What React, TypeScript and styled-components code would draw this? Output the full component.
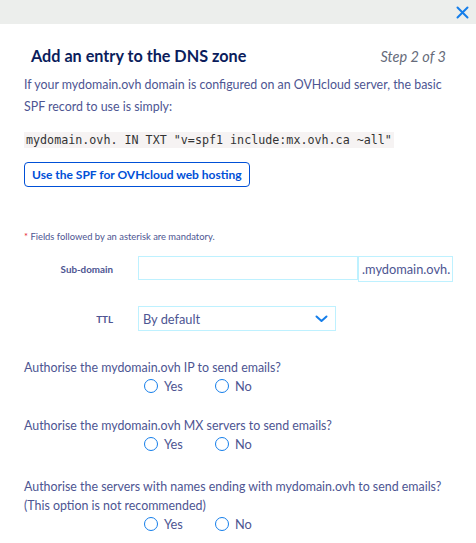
import React from 'react';
import styled, { createGlobalStyle } from 'styled-components';

const GlobalStyle = createGlobalStyle`
    body {
        margin: 0;
        background: #ffffff;
        font-family: Lato, "Open Sans", sans-serif;
        color: #4d5592;
    }
    * { box-sizing: border-box; }
`

const TopBar = styled.div`
    height: 24px;
    background: #eceeec;
    display: flex;
    justify-content: flex-end;
    align-items: center;
    padding-right: 7px;
`

const CloseButton = styled.button`
    border: 0;
    background: none;
    padding: 0;
    display: flex;
    cursor: pointer;
`

const Header = styled.div`
    display: flex;
    justify-content: space-between;
    align-items: baseline;
    padding: 20px 30px 0 31px;
`

const Title = styled.h2`
    margin: 0;
    font-size: 16.2px;
    line-height: 24px;
    font-weight: 700;
    color: #0b1d5c;
`

const Step = styled.span`
    font-size: 14.5px;
    font-style: italic;
    color: #666b7a;
`

const Body = styled.div`
    padding: 6px 24px 0 24px;
`

const Intro = styled.p`
    margin: 0;
    font-size: 12.4px;
    line-height: 22px;
`

const Code = styled.code`
    display: inline-block;
    margin-top: 14px;
    padding: 0 2px;
    background: #f6f3f3;
    color: #333;
    font-family: "DejaVu Sans Mono", "Liberation Mono", monospace;
    font-size: 11.7px;
    line-height: 16px;
`

const OutlineButton = styled.button`
    display: block;
    margin-top: 14px;
    height: 25px;
    padding: 0 7px;
    border: 1px solid #0050d7;
    border-radius: 4px;
    background: #fff;
    color: #0050d7;
    font-family: inherit;
    font-weight: 700;
    font-size: 12px;
`

const Note = styled.p`
    margin: 43px 0 0 0;
    font-size: 9.4px;
    line-height: 14px;
    & span { color: #e8283a; }
`

const FieldRow = styled.div<{ gap: number }>`
    display: grid;
    grid-template-columns: 89px auto;
    column-gap: 25px;
    align-items: center;
    margin-top: ${({ gap }) => gap}px;
`

const Label = styled.label`
    text-align: right;
    font-size: 9.8px;
    font-weight: 700;
`

const InputGroup = styled.div`
    display: flex;
`

const TextInput = styled.input`
    width: 220px;
    height: 24px;
    border: 1px solid #bef1ff;
    font-family: inherit;
    font-size: 12.4px;
    color: #4d5592;
    outline: none;
`

const Suffix = styled.span`
    height: 26px;
    border: 1px solid #bef1ff;
    padding: 0 2px 0 3px;
    display: flex;
    align-items: center;
    font-size: 12.8px;
`

const Select = styled.div`
    width: 198px;
    height: 25px;
    border: 1px solid #bef1ff;
    display: flex;
    align-items: center;
    justify-content: space-between;
    padding: 0 7px 0 4px;
    font-size: 12.8px;
`

const Question = styled.div<{ gap: number }>`
    margin-top: ${({ gap }) => gap}px;
`

const QuestionText = styled.p`
    margin: 0;
    font-size: 12.4px;
    line-height: 19px;
`

const RadioGroup = styled.div`
    display: flex;
    gap: 24px;
    padding-left: 120px;
`

const RadioOption = styled.label`
    display: flex;
    align-items: center;
    gap: 6px;
    font-size: 12.8px;
    line-height: 18px;
    width: 47px;
`

const RadioCircle = styled.span`
    width: 14px;
    height: 14px;
    border-radius: 50%;
    border: 1.5px solid #157eea;
    display: inline-block;
`

const Chevron = () => (
    <svg width="13" height="8" viewBox="0 0 13 8" fill="none">
        <path d="M1.5 1.5 L6.5 6 L11.5 1.5" stroke="#157eea" strokeWidth="2" strokeLinecap="round" strokeLinejoin="round" />
    </svg>
)

const CloseIcon = () => (
    <svg width="13" height="13" viewBox="0 0 13 13" fill="none">
        <path d="M1.5 1.5 L11.5 11.5 M11.5 1.5 L1.5 11.5" stroke="#157eea" strokeWidth="2" strokeLinecap="round" />
    </svg>
)

const questions = [
    { gap: 27, lines: ['Authorise the mydomain.ovh IP to send emails?'] },
    { gap: 21, lines: ['Authorise the mydomain.ovh MX servers to send emails?'] },
    { gap: 24, lines: ['Authorise the servers with names ending with mydomain.ovh to send emails?', '(This option is not recommended)'] },
]

export default function App() {
    return (
        <>
            <GlobalStyle />
            <TopBar>
                <CloseButton aria-label="Close"><CloseIcon /></CloseButton>
            </TopBar>
            <Header>
                <Title>Add an entry to the DNS zone</Title>
                <Step>Step 2 of 3</Step>
            </Header>
            <Body>
                <Intro>
                    If your mydomain.ovh domain is configured on an OVHcloud server, the basic SPF record to use is simply:
                </Intro>
                <Code>mydomain.ovh. IN TXT "v=spf1 include:mx.ovh.ca ~all"</Code>
                <OutlineButton>Use the SPF for OVHcloud web hosting</OutlineButton>
                <Note><span>*</span> Fields followed by an asterisk are mandatory.</Note>

                <FieldRow gap={12}>
                    <Label>Sub-domain</Label>
                    <InputGroup>
                        <TextInput />
                        <Suffix>.mydomain.ovh.</Suffix>
                    </InputGroup>
                </FieldRow>
                <FieldRow gap={24}>
                    <Label>TTL</Label>
                    <Select>
                        <span>By default</span>
                        <Chevron />
                    </Select>
                </FieldRow>

                {questions.map((q, i) => (
                    <Question key={i} gap={q.gap}>
                        {q.lines.map(line => <QuestionText key={line}>{line}</QuestionText>)}
                        <RadioGroup>
                            <RadioOption><RadioCircle />Yes</RadioOption>
                            <RadioOption><RadioCircle />No</RadioOption>
                        </RadioGroup>
                    </Question>
                ))}
            </Body>
        </>
    )
}
